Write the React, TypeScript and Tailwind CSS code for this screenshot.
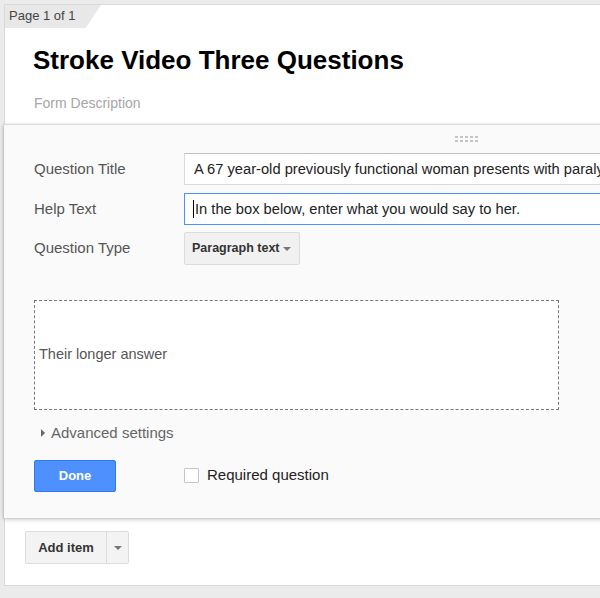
import React from 'react';

const font = { fontFamily: '"Liberation Sans", Arial, sans-serif' };

const Row: React.FC<{ label: string; children: React.ReactNode; className?: string }> = ({ label, children, className }) => (
  <div className={`flex items-center ${className ?? ''}`}>
    <div className="w-[150px] shrink-0 text-[15px] text-[#555]">{label}</div>
    {children}
  </div>
);

const App: React.FC = () => {
  return (
    <div className="h-[598px] w-[600px] overflow-hidden bg-[#ebebeb] pl-[4px] pt-[4px]" style={font}>
      <div className="w-[700px] h-[582px] border border-[#d9d9d9] bg-white">
        {/* page tab */}
        <div className="h-[23px] w-[96px] bg-[#e8e8e8] pl-[4px] pt-[3px] text-[13px] leading-[16px] text-[#444] [clip-path:polygon(0_0,100%_0,84%_100%,0_100%)]">
          Page 1 of 1
        </div>

        <div className="pl-[28px] pt-[16px]">
          <h1 className="text-[26px] font-bold leading-[32px] text-black">Stroke Video Three Questions</h1>
          <p className="mt-[18px] pl-[1px] text-[14px] leading-[18px] text-[#a6a6a6]">Form Description</p>
        </div>

        {/* question editor */}
        <div className="relative mt-[12px] -ml-[1px] h-[394px] border-t border-[#dcdcdc] bg-[#fafafa] pl-[30px] shadow-[0_2px_4px_rgba(0,0,0,0.18),-1px_0_2px_rgba(0,0,0,0.12)]">
          <div className="flex h-[28px] items-center pl-[421px]">
            <div className="grid grid-cols-5 gap-x-[2px] gap-y-[2px]">
              {Array.from({ length: 10 }).map((_, i) => (
                <span key={i} className="h-[2px] w-[3px] bg-[#c4c4c4]" />
              ))}
            </div>
          </div>

          <Row label="Question Title">
            <div className="flex h-[32px] flex-1 items-center overflow-hidden border border-[#d9d9d9] border-t-[#c0c0c0] bg-white pl-[9px] text-[14.7px] whitespace-nowrap text-[#222]">
              A 67 year-old previously functional woman presents with paralysis
            </div>
          </Row>

          <Row label="Help Text" className="mt-[8px]">
            <div className="flex h-[32px] flex-1 items-center border border-[#4d90fe] bg-white pl-[9px] text-[14.7px] whitespace-nowrap text-[#222]">
              <span className="-ml-[1px] mr-[1px] inline-block h-[18px] w-[1px] bg-black" />
              In the box below, enter what you would say to her.
            </div>
          </Row>

          <Row label="Question Type" className="mt-[7px]">
            <div className="flex h-[33px] w-[116px] items-center justify-between whitespace-nowrap rounded-[2px] border border-[#dcdcdc] bg-[#f1f1f1] pl-[7px] pr-[8px] text-[12.5px] font-bold text-[#333]">
              <span>Paragraph text</span>
              <span className="h-0 w-0 border-x-[4px] border-t-[4px] border-x-transparent border-t-[#777]" />
            </div>
          </Row>

          <div className="mt-[35px] flex h-[110px] w-[525px] items-center border border-dashed border-[#777] bg-white pl-[4px] text-[14.5px] text-[#555]">
            Their longer answer
          </div>

          <div className="mt-[12px] flex items-center pl-[7px] text-[15px] text-[#666]">
            <span className="mr-[6px] h-0 w-0 border-y-[4px] border-l-[4px] border-y-transparent border-l-[#666]" />
            Advanced settings
          </div>

          <div className="mt-[15px] flex items-center">
            <div className="flex h-[32px] w-[82px] items-center justify-center rounded-[2px] border border-[#3079ed] bg-[#4d90fe] text-[13px] font-bold text-white">
              Done
            </div>
            <div className="ml-[68px] h-[15px] w-[15px] rounded-[1px] border border-[#c6c6c6] bg-white" />
            <span className="ml-[8px] text-[15px] text-[#222]">Required question</span>
          </div>
        </div>

        {/* add item */}
        <div className="mt-[13px] pl-[20px]">
          <div className="flex h-[33px] w-[104px] rounded-[2px] border border-[#dcdcdc] bg-[#f3f3f3] text-[13px] font-bold text-[#333]">
            <div className="flex flex-1 items-center justify-center border-r border-[#dcdcdc]">Add item</div>
            <div className="flex w-[21px] items-center justify-center">
              <span className="h-0 w-0 border-x-[4px] border-t-[4px] border-x-transparent border-t-[#777]" />
            </div>
          </div>
        </div>
      </div>
    </div>
  );
};

export default App;
